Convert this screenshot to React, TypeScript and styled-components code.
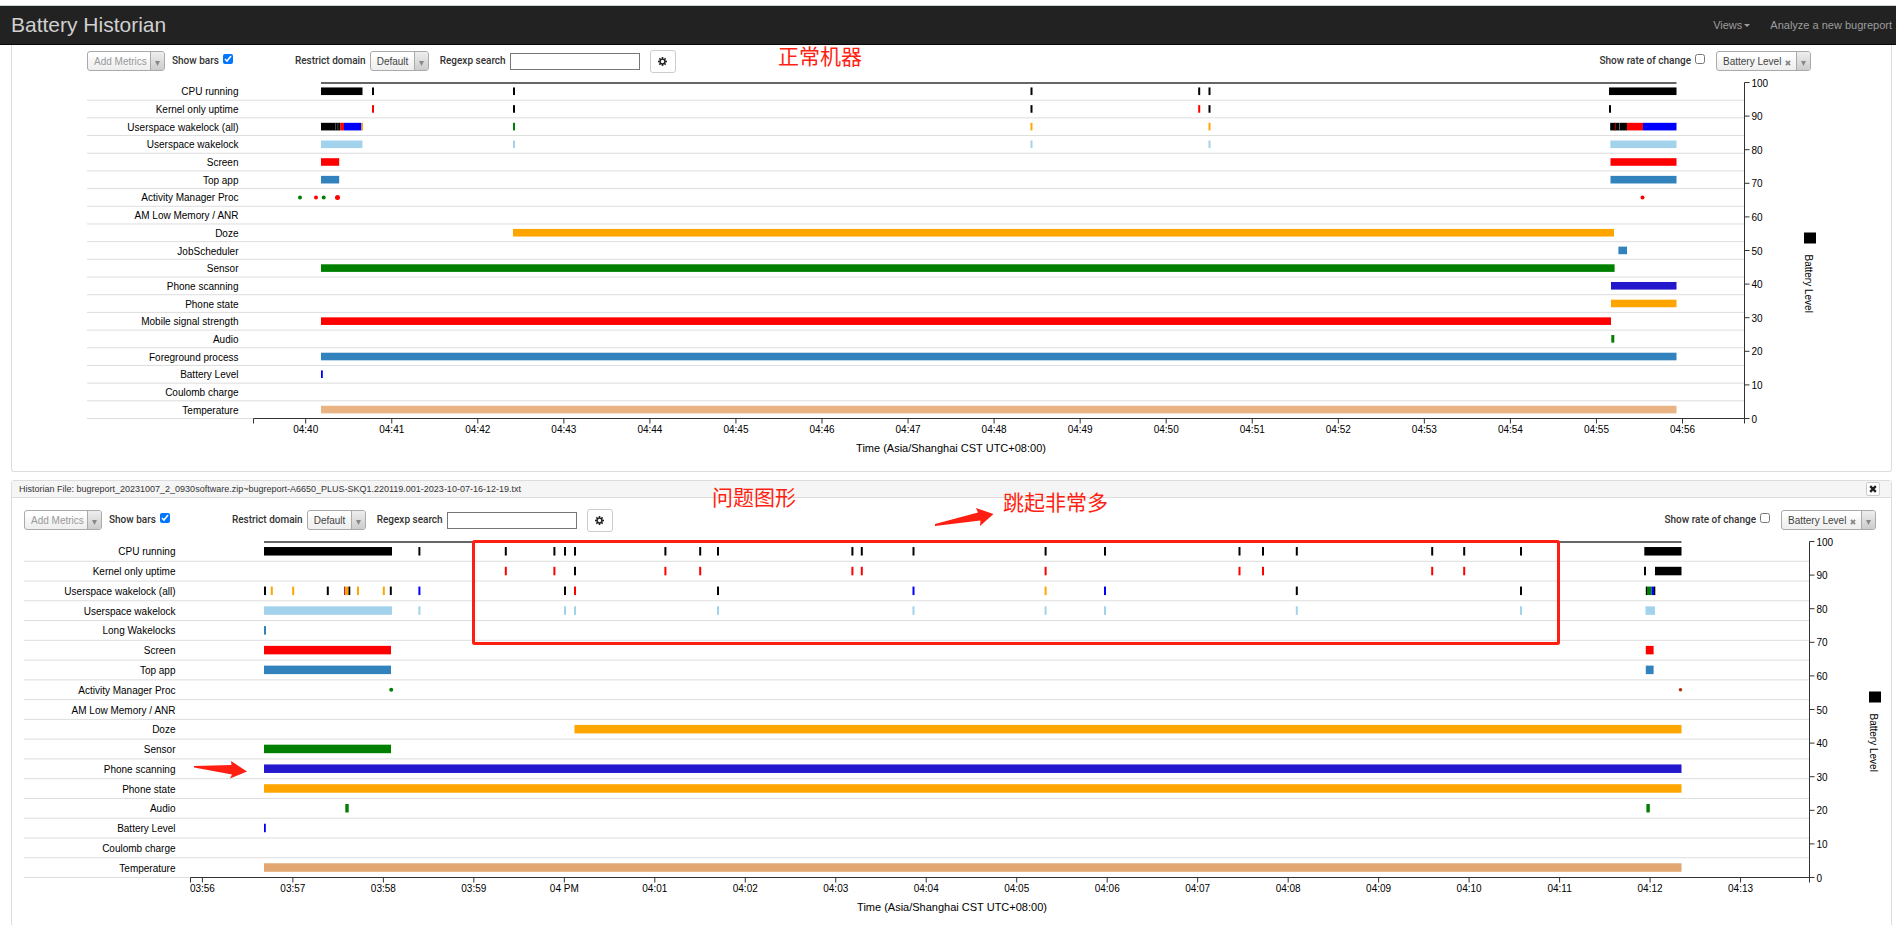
import React, { useLayoutEffect, useRef, useState } from "react";
import styled, { createGlobalStyle } from "styled-components";

const GlobalStyle = createGlobalStyle`
  html { scrollbar-width: none; }
  body {
    margin: 0;
    background: #fff;
    color: #333;
    font-family: "Liberation Sans", "Noto Sans CJK SC", sans-serif;
    font-size: 10px;
    line-height: 14px;
  }
  button, input, select { font: inherit; color: inherit; }
`;

/* ---------- colours ---------- */
const BLACK = "#000";
const RED = "#f00";
const GREEN = "#008000";
const BLUE = "#00f";
const ORANGE = "#ffa500";
const SKY = "#a3d3ec";
const STEEL = "#3182bd";
const INDIGO = "#2318cc";
const MARK = "#ff1f12";

/* ---------- data ---------- */
type Span = { from: number; to: number; color: string };
type Dot = { at: number; color: string; r?: number };
type Series = { name: string; spans?: Span[]; dots?: Dot[] };
type ChartData = {
  title: string;
  domain: [number, number];
  level: [number, number];
  ticks: { first: number; step: number; labels: string[] };
  series: Series[];
  highlight?: { from: number; to: number; height: number };
};

const span = (from: number, to: number, color: string): Span => ({ from, to, color });
const pulses = (color: string, ...at: number[]): Span[] =>
  at.map((x) => ({ from: x - 1, to: x + 1, color }));

const normalChart: ChartData = {
  title: "Time (Asia/Shanghai CST UTC+08:00)",
  domain: [253.5, 1744.5],
  level: [321, 1676.5],
  ticks: {
    first: 305.7,
    step: 86.05,
    labels: Array.from({ length: 17 }, (_, i) => `04:${40 + i}`),
  },
  series: [
    {
      name: "CPU running",
      spans: [
        span(321, 362.5, BLACK),
        ...pulses(BLACK, 373, 514, 1031.5, 1199.2, 1209.5),
        span(1609, 1676.5, BLACK),
      ],
    },
    {
      name: "Kernel only uptime",
      spans: [...pulses(RED, 373, 1199.2), ...pulses(BLACK, 514, 1031.5, 1209.5, 1610)],
    },
    {
      name: "Userspace wakelock (all)",
      spans: [
        span(321, 340.5, BLACK),
        span(335.4, 336, "#777"),
        span(337.6, 338.2, "#777"),
        span(340.5, 344, RED),
        span(344, 361.5, BLUE),
        span(361.5, 363, ORANGE),
        ...pulses(GREEN, 514),
        ...pulses(ORANGE, 1031.5, 1209.5),
        span(1610.2, 1627, BLACK),
        span(1614.8, 1615.8, "#b00"),
        span(1619, 1619.8, "#888"),
        span(1627, 1643, RED),
        span(1643, 1676.5, BLUE),
      ],
    },
    {
      name: "Userspace wakelock",
      spans: [span(321, 362.5, SKY), ...pulses(SKY, 514, 1031.5, 1209.5), span(1610.3, 1676.5, SKY)],
    },
    { name: "Screen", spans: [span(321, 339.2, RED), span(1610.5, 1676.5, RED)] },
    { name: "Top app", spans: [span(321, 339.2, STEEL), span(1610.5, 1676.5, STEEL)] },
    {
      name: "Activity Manager Proc",
      dots: [
        { at: 300, color: GREEN },
        { at: 316, color: RED },
        { at: 323.7, color: GREEN },
        { at: 337.5, color: RED, r: 2.5 },
        { at: 1642.5, color: RED },
      ],
    },
    { name: "AM Low Memory / ANR" },
    { name: "Doze", spans: [span(513, 1614, ORANGE)] },
    { name: "JobScheduler", spans: [span(1618.4, 1627, STEEL)] },
    { name: "Sensor", spans: [span(321, 1614.6, GREEN)] },
    { name: "Phone scanning", spans: [span(1611, 1676.5, INDIGO)] },
    { name: "Phone state", spans: [span(1611, 1676.5, ORANGE)] },
    { name: "Mobile signal strength", spans: [span(321, 1611, RED)] },
    { name: "Audio", spans: [span(1611.3, 1614.3, GREEN)] },
    { name: "Foreground process", spans: [span(321, 1676.5, STEEL)] },
    { name: "Battery Level", spans: [span(321, 322.8, BLUE)] },
    { name: "Coulomb charge" },
    { name: "Temperature", spans: [span(321, 1676.5, "#e9b384")] },
  ],
};

const problemChart: ChartData = {
  title: "Time (Asia/Shanghai CST UTC+08:00)",
  domain: [190.5, 1809.5],
  level: [264, 1681.5],
  ticks: {
    first: 202.4,
    step: 90.48,
    labels: [
      "03:56", "03:57", "03:58", "03:59", "04 PM", "04:01", "04:02", "04:03", "04:04",
      "04:05", "04:06", "04:07", "04:08", "04:09", "04:10", "04:11", "04:12", "04:13",
    ],
  },
  series: [
    {
      name: "CPU running",
      spans: [
        span(264, 392, BLACK),
        ...pulses(
          BLACK, 419.4, 505.8, 554.4, 565, 575, 665.4, 700.2, 718, 852.4, 861.8, 913.5,
          1045.6, 1105, 1239.5, 1263, 1296.8, 1432.2, 1464.2, 1521,
        ),
        span(1644.3, 1681.5, BLACK),
      ],
    },
    {
      name: "Kernel only uptime",
      spans: [
        ...pulses(RED, 505.8, 554.4, 665.4, 700.2, 852.4, 861.8, 1045.6, 1239.5, 1263, 1432.2, 1464.2),
        ...pulses(BLACK, 575, 1645),
        span(1655, 1681.5, BLACK),
      ],
    },
    {
      name: "Userspace wakelock (all)",
      spans: [
        ...pulses(BLACK, 265, 327.8, 390.8, 565, 718, 1296.8, 1521),
        ...pulses(ORANGE, 271.8, 293.2, 358, 383.8, 1045.6),
        span(344, 345.5, "#c22"),
        span(345.5, 348.5, ORANGE),
        span(348.5, 350.3, BLACK),
        ...pulses(BLUE, 419.4, 913.5, 1105),
        ...pulses(RED, 575),
        span(1645.8, 1647, BLACK),
        span(1647, 1651.5, GREEN),
        span(1651.5, 1654, BLUE),
        span(1654, 1655.3, BLACK),
      ],
    },
    {
      name: "Userspace wakelock",
      spans: [
        span(264, 392, SKY),
        ...pulses(SKY, 419.4, 565, 575, 718, 913.5, 1045.6, 1105, 1296.8, 1521),
        span(1645.5, 1655, SKY),
      ],
    },
    { name: "Long Wakelocks", spans: [span(264, 266, STEEL)] },
    { name: "Screen", spans: [span(264, 391, RED), span(1645.8, 1653.6, RED)] },
    { name: "Top app", spans: [span(264, 391, STEEL), span(1645.8, 1653.6, STEEL)] },
    {
      name: "Activity Manager Proc",
      dots: [
        { at: 391.2, color: GREEN },
        { at: 1680.5, color: "#b03010", r: 1.8 },
      ],
    },
    { name: "AM Low Memory / ANR" },
    { name: "Doze", spans: [span(574.5, 1681.5, ORANGE)] },
    { name: "Sensor", spans: [span(264, 391, GREEN)] },
    { name: "Phone scanning", spans: [span(264, 1681.5, INDIGO)] },
    { name: "Phone state", spans: [span(264, 1681.5, ORANGE)] },
    { name: "Audio", spans: [span(345.3, 348.7, GREEN), span(1646.4, 1649.8, GREEN)] },
    { name: "Battery Level", spans: [span(264, 265.8, BLUE)] },
    { name: "Coulomb charge" },
    { name: "Temperature", spans: [span(264, 1681.5, "#e2a670")] },
  ],
  highlight: { from: 473.5, to: 1558.5, height: 102 },
};

/* ---------- page chrome ---------- */
const Page = styled.div`
  padding-top: 5px;
`;

const NavBar = styled.header`
  display: flex;
  align-items: center;
  justify-content: space-between;
  height: 38px;
  padding: 0 4px 0 11px;
  background: #222;
  border-top: 1px solid #c9d6cc;
  border-bottom: 1px solid #080808;
`;

const Brand = styled.a`
  color: #d0d0d0;
  font-size: 21px;
  line-height: 24px;
  text-decoration: none;
`;

const NavLinks = styled.nav`
  display: flex;
  gap: 20px;
`;

const NavLink = styled.a`
  display: flex;
  align-items: center;
  gap: 2px;
  color: #9d9d9d;
  font-size: 11px;
  text-decoration: none;
`;

const Caret = styled.span`
  border: 3px solid transparent;
  border-top-color: currentColor;
  border-bottom: 0;
`;

const Panel = styled.section<{ $continued?: boolean }>`
  position: relative;
  margin: 0 4px 8px 11px;
  border: 1px solid #ddd;
  border-top-width: ${(p) => (p.$continued ? 0 : 1)}px;
  border-radius: ${(p) => (p.$continued ? "0 0 3px 3px" : "3px")};
`;

const PanelHeading = styled.h2`
  display: flex;
  align-items: center;
  justify-content: space-between;
  height: 16px;
  margin: 0;
  padding: 0 11px 0 7px;
  background: #f5f5f5;
  border-bottom: 1px solid #ddd;
  font-size: 9px;
  font-weight: 400;
`;

const PanelBody = styled.div<{ $inset?: boolean; $spaced?: boolean }>`
  padding: ${(p) => (p.$spaced ? 6 : 0)}px ${(p) => (p.$inset ? 65 : 0)}px 0
    ${(p) => (p.$inset ? 75 : 12)}px;
`;

const CloseButton = styled.button`
  display: grid;
  place-items: center;
  width: 14px;
  height: 14px;
  padding: 0;
  background: #fff;
  border: 1px solid #ccc;
  border-radius: 2px;
`;

/* ---------- toolbar ---------- */
const Toolbar = styled.div`
  display: flex;
  align-items: center;
  justify-content: space-between;
  height: 30px;
  padding: 2px 15px 0 0;
  box-sizing: border-box;
`;

const ToolGroup = styled.div`
  display: flex;
  align-items: center;
`;

const Field = styled.label<{ $before?: number }>`
  display: flex;
  align-items: center;
  gap: 4px;
  margin-left: ${(p) => p.$before ?? 0}px;
  color: #333;
  font-family: Roboto, "Liberation Sans", sans-serif;
  font-weight: 500;
  white-space: nowrap;
`;

const Tick = styled.input`
  width: 10px;
  height: 10px;
  margin: 0 0 5px;
`;

const SearchBox = styled.input`
  width: 130px;
  height: 17px;
  box-sizing: border-box;
  padding: 0 4px;
  border: 1px solid #767676;
  outline: 0;
`;

const Combo = styled.span<{ $width: number }>`
  display: flex;
  width: ${(p) => p.$width}px;
  height: 20px;
  box-sizing: border-box;
  border: 1px solid #aaa;
  border-radius: 3px;
  background: linear-gradient(#fff 20%, #f6f6f6 50%, #eee 100%);
  font-family: "Liberation Sans", sans-serif;
  font-weight: 400;
  overflow: hidden;
`;

const ComboSelect = styled.select<{ $muted?: boolean }>`
  flex: 1;
  min-width: 0;
  padding: 2px 0 0 6px;
  appearance: none;
  background: none;
  border: 0;
  outline: 0;
  color: ${(p) => (p.$muted ? "#999" : "#444")};
`;

const ComboClear = styled.button`
  display: grid;
  place-items: center;
  width: 12px;
  padding: 3px 4px 0 0;
  background: none;
  border: 0;
`;

const ComboArrow = styled.span`
  display: grid;
  place-items: center;
  width: 13px;
  padding-top: 4px;
  background: linear-gradient(#eee, #ccc);
  border-left: 1px solid #aaa;
`;

const GearButton = styled.button`
  display: grid;
  place-items: center;
  width: 26px;
  height: 23px;
  margin-left: 10px;
  padding: 0;
  background: #fff;
  border: 1px solid #ccc;
  border-radius: 3px;
`;

/* ---------- notes drawn over the panels ---------- */
const Note = styled.p<{ $x: number; $y: number }>`
  position: absolute;
  left: ${(p) => p.$x}px;
  top: ${(p) => p.$y}px;
  margin: 0;
  color: ${MARK};
  font-family: "Noto Sans CJK SC", sans-serif;
  font-size: 21px;
  line-height: 20px;
  white-space: nowrap;
`;

const Arrow = styled.svg<{ $x: number; $y: number }>`
  position: absolute;
  left: ${(p) => p.$x}px;
  top: ${(p) => p.$y}px;
  fill: ${MARK};
`;

/* ---------- chart ---------- */
const ChartSvg = styled.svg`
  display: block;
  width: 100%;
  height: 396px;
  overflow: visible;
  font-size: 10px;
  fill: #000;
`;

const AxisTitle = styled.text`
  font-size: 11px;
  text-anchor: middle;
`;

const TOP = 7.5;
const PLOT_HEIGHT = 336;
const LEFT = 166.5;
const RIGHT = 81.5;
const BASE = TOP + PLOT_HEIGHT;

function Chart({ data }: { data: ChartData }) {
  const ref = useRef<SVGSVGElement>(null);
  const [width, setWidth] = useState(1804);

  useLayoutEffect(() => {
    const node = ref.current;
    if (!node) return;
    const measure = () => setWidth(node.getBoundingClientRect().width);
    measure();
    const observer = new ResizeObserver(measure);
    observer.observe(node);
    return () => observer.disconnect();
  }, []);

  const end = width - RIGHT;
  const [d0, d1] = data.domain;
  const x = (value: number) => LEFT + ((value - d0) / (d1 - d0)) * (end - LEFT);
  const row = PLOT_HEIGHT / data.series.length;
  const bar = row * 0.43;

  return (
    <ChartSvg ref={ref} role="img" aria-label={data.title}>
      {data.series.map((series, i) => {
        const top = TOP + i * row;
        return (
          <g key={series.name}>
            <line x1={0} x2={end} y1={top + row} y2={top + row} stroke="#ddd" />
            <text x={LEFT - 15} y={top + row / 2 + 4} textAnchor="end">
              {series.name}
            </text>
            {series.spans?.map((s, k) => (
              <rect
                key={k}
                x={x(s.from)}
                y={top + row * 0.28}
                width={x(s.to) - x(s.from)}
                height={bar}
                fill={s.color}
              />
            ))}
            {series.dots?.map((d, k) => (
              <circle key={k} cx={x(d.at)} cy={top + row * 0.5} r={d.r ?? 2} fill={d.color} />
            ))}
          </g>
        );
      })}

      <line
        x1={x(data.level[0])}
        x2={x(data.level[1])}
        y1={TOP + 0.5}
        y2={TOP + 0.5}
        stroke="#666"
        strokeWidth={2}
      />

      <path d={`M${LEFT},${BASE + 5}V${BASE}H${end}V${BASE + 5}`} fill="none" stroke="#333" />
      {data.ticks.labels.map((label, i) => {
        const at = x(data.ticks.first + i * data.ticks.step);
        return (
          <g key={label}>
            <line x1={at} x2={at} y1={BASE} y2={BASE + 5} stroke="#333" />
            <text x={at} y={BASE + 14} textAnchor="middle">
              {label}
            </text>
          </g>
        );
      })}
      <AxisTitle x={(LEFT + end) / 2 - 48} y={BASE + 33}>
        {data.title}
      </AxisTitle>

      <line x1={end} x2={end} y1={TOP} y2={BASE} stroke="#333" />
      {Array.from({ length: 11 }, (_, i) => {
        const y = BASE - (i * PLOT_HEIGHT) / 10;
        return (
          <g key={i}>
            <line x1={end} x2={end + 5} y1={y} y2={y} stroke="#333" />
            <text x={end + 7} y={y + 4}>
              {i * 10}
            </text>
          </g>
        );
      })}

      <rect x={end + 59.5} y={TOP + 150} width={12} height={11} />
      <text transform={`translate(${end + 60} ${TOP + 172}) rotate(90)`}>Battery Level</text>

      {data.highlight && (
        <rect
          x={x(data.highlight.from)}
          y={TOP}
          width={x(data.highlight.to) - x(data.highlight.from)}
          height={data.highlight.height}
          rx={1}
          fill="none"
          stroke={MARK}
          strokeWidth={3}
        />
      )}
    </ChartSvg>
  );
}

const Cross = ({ size, color }: { size: number; color: string }) => (
  <svg width={size} height={size} viewBox="0 0 8 8" aria-hidden="true">
    <path d="M1.2 1.2L6.8 6.8M6.8 1.2L1.2 6.8" stroke={color} strokeWidth={2.4} />
  </svg>
);

const Gear = () => (
  <svg width="9" height="9" viewBox="0 0 18 18" aria-hidden="true">
    <circle cx="9" cy="9" r="4.8" fill="none" stroke="#222" strokeWidth="2.8" />
    {[0, 45, 90, 135, 180, 225, 270, 315].map((a) => (
      <rect key={a} x="7.4" y="0" width="3.2" height="4" fill="#222" transform={`rotate(${a} 9 9)`} />
    ))}
  </svg>
);

const DownArrow = () => (
  <ComboArrow aria-hidden="true">
    <svg width="5" height="5" viewBox="0 0 5 5">
      <path d="M0 0H5L2.5 5Z" fill="#888" />
    </svg>
  </ComboArrow>
);

function Controls() {
  return (
    <Toolbar>
      <ToolGroup>
        <Combo $width={78}>
          <ComboSelect $muted aria-label="Add Metrics">
            <option>Add Metrics</option>
          </ComboSelect>
          <DownArrow />
        </Combo>
        <Field $before={7}>
          Show bars
          <Tick type="checkbox" defaultChecked />
        </Field>
        <Field $before={62}>
          Restrict domain
          <Combo $width={59}>
            <ComboSelect>
              <option>Default</option>
            </ComboSelect>
            <DownArrow />
          </Combo>
        </Field>
        <Field $before={11}>
          Regexp search
          <SearchBox type="text" />
        </Field>
        <GearButton type="button" aria-label="Settings">
          <Gear />
        </GearButton>
      </ToolGroup>
      <ToolGroup>
        <Field>
          Show rate of change
          <Tick type="checkbox" />
        </Field>
        <Field $before={11}>
          <Combo $width={95}>
            <ComboSelect aria-label="Overlay metric">
              <option>Battery Level</option>
            </ComboSelect>
            <ComboClear type="button" aria-label="Clear">
              <Cross size={6} color="#888" />
            </ComboClear>
            <DownArrow />
          </Combo>
        </Field>
      </ToolGroup>
    </Toolbar>
  );
}

export default function App() {
  return (
    <Page>
      <GlobalStyle />
      <NavBar>
        <Brand href="#">Battery Historian</Brand>
        <NavLinks>
          <NavLink href="#views">
            Views
            <Caret />
          </NavLink>
          <NavLink href="#new">Analyze a new bugreport</NavLink>
        </NavLinks>
      </NavBar>

      <main>
        <Panel $continued>
          <PanelBody $inset>
            <Controls />
            <Chart data={normalChart} />
          </PanelBody>
          <Note $x={766} $y={0}>正常机器</Note>
        </Panel>

        <Panel>
          <PanelHeading>
            Historian File: bugreport_20231007_2_0930software.zip~bugreport-A6650_PLUS-SKQ1.220119.001-2023-10-07-16-12-19.txt
            <CloseButton type="button" aria-label="Close">
              <Cross size={8} color="#222" />
            </CloseButton>
          </PanelHeading>
          <PanelBody $spaced>
            <Controls />
            <Chart data={problemChart} />
          </PanelBody>
          <Note $x={700} $y={5}>问题图形</Note>
          <Note $x={991} $y={10}>跳起非常多</Note>
          <Arrow $x={922} $y={26} width="60" height="20" viewBox="0 0 60 20" aria-hidden="true">
            <path d="M1 17L44 5.500L42 1L59.500 7L46 19L46.500 13.500L1 19Z" />
          </Arrow>
          <Arrow $x={181} $y={279} width="54" height="20" viewBox="0 0 54 20" aria-hidden="true">
            <path d="M1 6L38.500 5L38 1L54 11.500L37 18.500L39 14.500L1 7.500Z" />
          </Arrow>
        </Panel>
      </main>
    </Page>
  );
}
